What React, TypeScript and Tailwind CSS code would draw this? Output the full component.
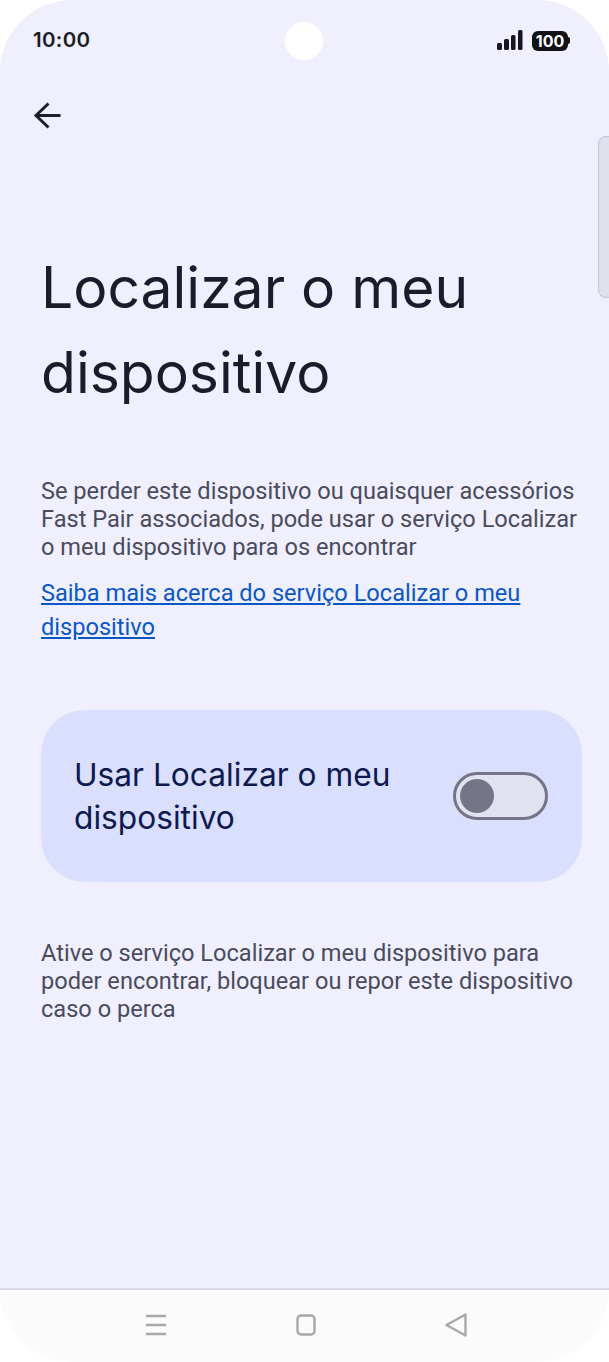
export default function App() {
  return (
    <div className="relative flex h-[1362px] w-[609px] flex-col overflow-hidden bg-white font-['Roboto',sans-serif]">
      <main className="relative flex flex-1 flex-col rounded-t-[72px] bg-[#efeffd]">
        <div className="relative flex h-[80px] items-center justify-between pl-[33px] pr-[39px]">
          <span className="pt-[1px] text-[20.5px] font-semibold tracking-[0.3px] text-[#1c1c24] font-['Inter',sans-serif]">10:00</span>
          <div className="absolute left-[285px] top-[22px] h-[38px] w-[38px] rounded-full bg-white" />
          <div className="flex items-end gap-[9px]">
            <svg width="26" height="21" viewBox="0 0 26 21" fill="#16161c">
              <rect x="0" y="13" width="5" height="7" rx="1.5" />
              <rect x="7" y="9" width="5" height="11" rx="1.5" />
              <rect x="14" y="5" width="4.5" height="15" rx="1.5" />
              <rect x="21" y="0" width="4.5" height="20" rx="1.5" />
            </svg>
            <div className="flex items-center">
              <div className="flex h-[20px] w-[36px] items-center justify-center rounded-[6px] bg-[#111116] text-[16px] font-bold leading-none text-white font-['Inter',sans-serif]">100</div>
              <div className="h-[7px] w-[2px] rounded-r-sm bg-[#111116]" />
            </div>
          </div>
        </div>
        <div className="pl-[33px] pt-[21px]">
          <svg width="28" height="28" viewBox="0 0 28 28" fill="none" stroke="#1f1f27" strokeWidth="3">
            <path d="M27.5 14.5H3" />
            <path d="M15.5 2.5 3 14.5l12.5 12" />
          </svg>
        </div>
        <h1 className="ml-[41px] mt-[116px] text-[57px] font-normal leading-[85px] text-[#1c1c28] font-['Inter',sans-serif]">
          Localizar o meu<br />dispositivo
        </h1>
        <p className="ml-[41px] mt-[62px] w-[560px] text-[23.6px] leading-[28px] text-[#4a4b5c]">
          Se perder este dispositivo ou quaisquer acessórios<br />
          Fast Pair associados, pode usar o serviço Localizar<br />
          o meu dispositivo para os encontrar
        </p>
        <a className="ml-[41px] mt-[15px] block w-[520px] text-[23.6px] leading-[34px] text-[#0b57c4] underline">
          Saiba mais acerca do serviço Localizar o meu dispositivo
        </a>
        <section className="ml-[41px] mt-[66px] flex h-[172px] w-[541px] items-center justify-between rounded-[44px] bg-[#dadffe] pl-[33px] pr-[34px]">
          <span className="text-[31.7px] leading-[43px] text-[#0e1a4d] font-['Inter',sans-serif]">
            Usar Localizar o meu<br />dispositivo
          </span>
          <div className="flex h-[48px] w-[95px] items-center rounded-full border-[3.5px] border-[#747688] bg-[#e0e2f0] pl-[4px]">
            <div className="h-[34px] w-[34px] rounded-full bg-[#747688]" />
          </div>
        </section>
        <p className="ml-[41px] mt-[57px] w-[560px] text-[23.6px] leading-[28px] text-[#4a4b5c]">
          Ative o serviço Localizar o meu dispositivo para<br />
          poder encontrar, bloquear ou repor este dispositivo<br />
          caso o perca
        </p>
        <div className="absolute right-0 top-[136px] h-[162px] w-[11px] rounded-l-[8px] border border-r-0 border-[#c5c6d4] bg-[#dfe0ec]" />
      </main>
      <footer className="flex h-[74px] items-center rounded-b-[72px] border-t-2 border-[#d9d9e6] bg-[#fbfbfb]">
        <div className="flex w-full items-center justify-start pb-[2px] pl-[145px]">
          <div className="flex w-[322px] items-center justify-between">
            <svg width="22" height="22" viewBox="0 0 22 22" fill="none" stroke="#a8a8a8" strokeWidth="2.5">
              <path d="M1 2h20M1 11h20M1 20h20" />
            </svg>
            <svg width="20" height="22" viewBox="0 0 20 22" fill="none" stroke="#a8a8a8" strokeWidth="2.4">
              <rect x="1.5" y="1.5" width="17" height="19" rx="3.5" />
            </svg>
            <svg width="22" height="24" viewBox="0 0 22 24" fill="none" stroke="#a8a8a8" strokeWidth="2.4" strokeLinejoin="round">
              <path d="M20.5 1.5v21L1.5 12z" />
            </svg>
          </div>
        </div>
      </footer>
    </div>
  );
}
